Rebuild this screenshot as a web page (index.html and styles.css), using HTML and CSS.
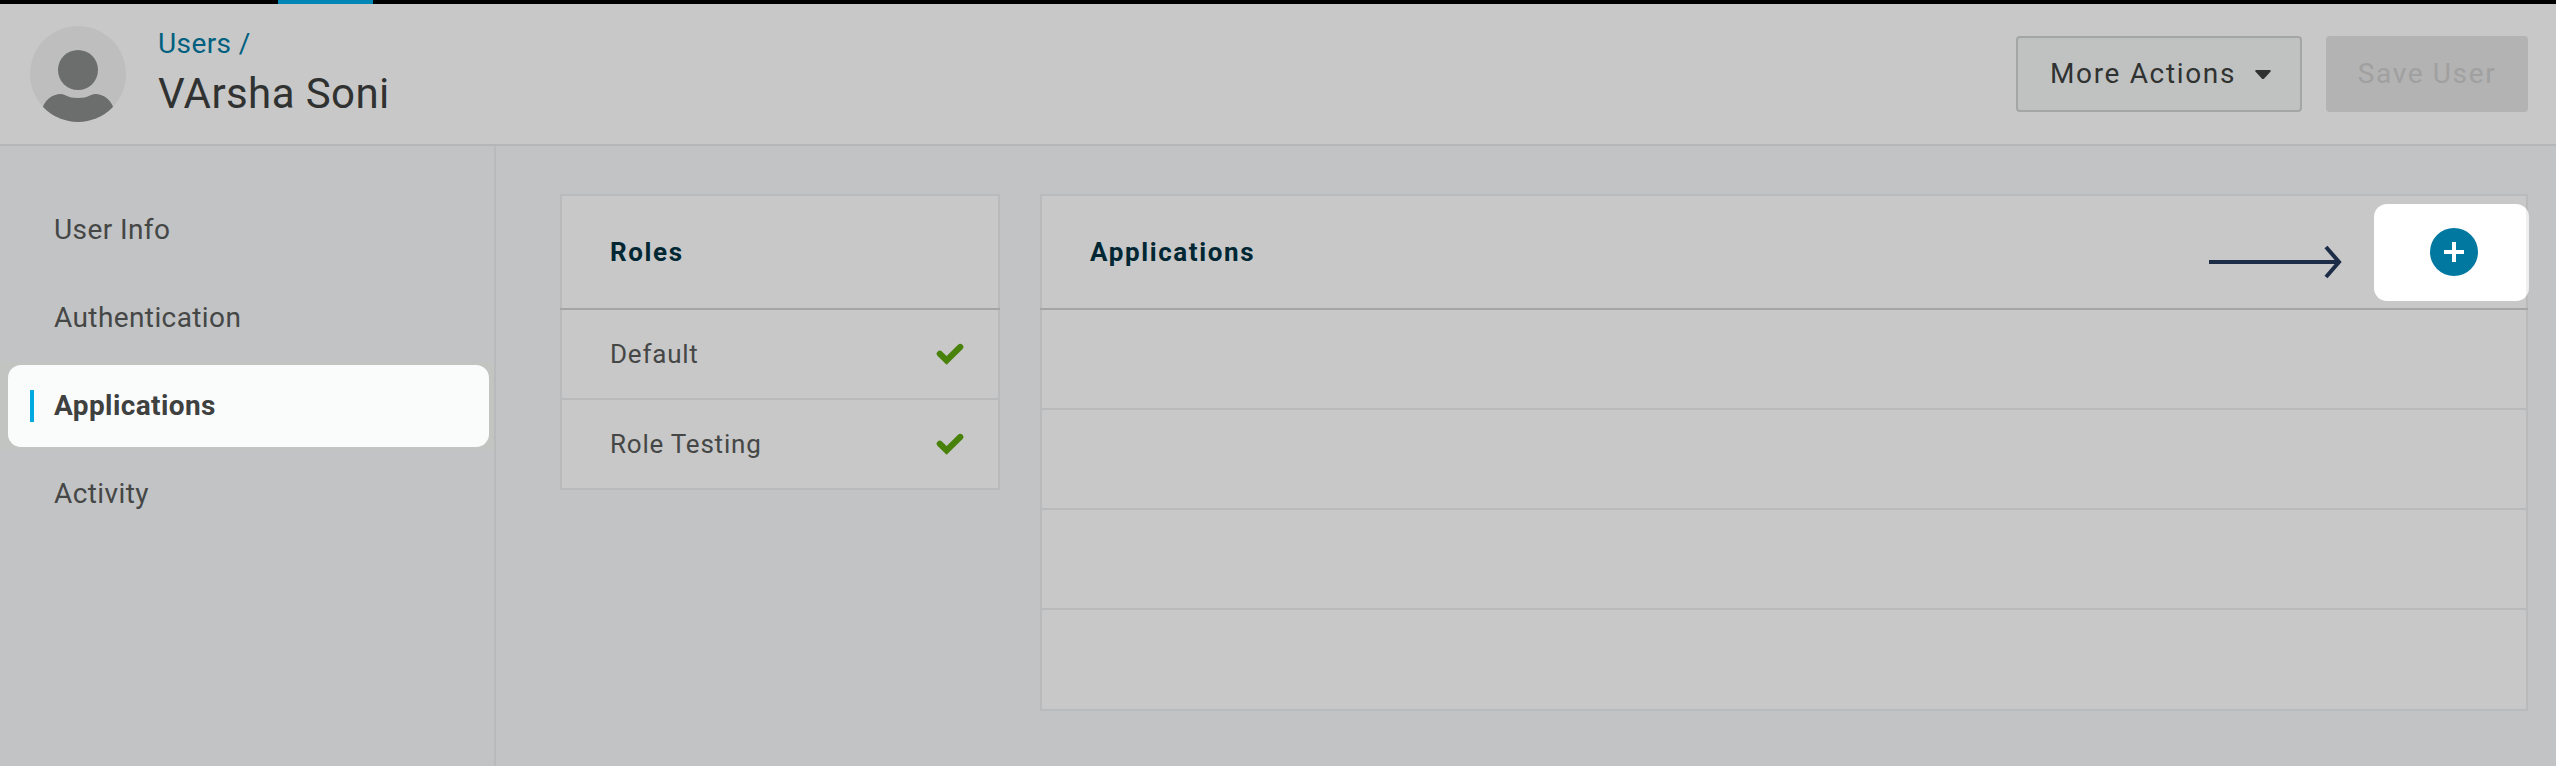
FILE: index.html
```
<!DOCTYPE html>
<html lang="en">
<head>
<meta charset="utf-8">
<title>Users / VArsha Soni</title>
<link rel="stylesheet" href="styles.css">
</head>
<body>
<div class="topbar"><div class="topbar-active"></div></div>
<header class="header">
  <svg class="avatar" viewBox="0 0 96 96">
    <defs><clipPath id="disc"><circle cx="48" cy="48" r="48"/></clipPath></defs>
    <circle cx="48" cy="48" r="48" fill="#bebebe"/>
    <g fill="#6c6e6d" clip-path="url(#disc)">
      <circle cx="48" cy="44" r="20"/>
      <path d="M11 86C14 74 22 68 31 68C35.500 68 37 72 48 72C59 72 60.500 68 65 68C74 68 82 74 85 86V96H11Z"/>
    </g>
  </svg>
  <div class="titles">
    <a class="crumb">Users /</a>
    <h1 class="name">VArsha Soni</h1>
  </div>
  <button class="btn btn-more"><span class="label">More Actions</span>
    <svg class="caret" viewBox="0 0 16 9"><path d="M1 0H15Q16.400 .6 15.400 1.800L9.200 8.400Q8 9.400 6.800 8.400L.6 1.800Q-.4 .6 1 0Z" fill="#303231"/></svg>
  </button>
  <button class="btn btn-save"><span class="label">Save User</span></button>
</header>
<div class="body">
  <nav class="sidebar">
    <a class="item"><span class="label">User Info</span></a>
    <a class="item"><span class="label">Authentication</span></a>
    <a class="item item-active"><span class="item-spot"><span class="marker"></span><span class="label">Applications</span></span></a>
    <a class="item"><span class="label">Activity</span></a>
  </nav>
  <main class="main">
    <section class="panel roles">
      <div class="panel-head">Roles</div>
      <div class="role">Default
        <svg class="check" viewBox="0 0 28 22"><path d="M3.800 10.800L10.600 17.400L24.200 4" fill="none" stroke="#49820b" stroke-width="6.200" stroke-linecap="round"/></svg>
      </div>
      <div class="role">Role Testing
        <svg class="check" viewBox="0 0 28 22"><path d="M3.800 10.800L10.600 17.400L24.200 4" fill="none" stroke="#49820b" stroke-width="6.200" stroke-linecap="round"/></svg>
      </div>
    </section>
    <section class="panel apps">
      <div class="panel-head">Applications
        <svg class="arrow" viewBox="0 0 134 34"><path d="M0 17H129M117 2L130 17L117 32" fill="none" stroke="#1d2d47" stroke-width="4"/></svg>
        <span class="add-spot"><svg class="add" viewBox="0 0 48 48"><circle cx="24" cy="24" r="24" fill="#00789f"/><path d="M14 24H34M24 14V34" stroke="#fff" stroke-width="4"/></svg></span>
      </div>
      <div class="slot"></div><div class="slot"></div><div class="slot"></div><div class="slot slot-last"></div>
    </section>
  </main>
</div>
</body>
</html>
```
FILE: styles.css
```
* { box-sizing: border-box; }
body { margin: 0; height: 766px; display: flex; flex-direction: column; overflow: hidden; background: #c2c3c5; color: #454746; font-family: Roboto, sans-serif; font-size: 28px; letter-spacing: .4px; }
.topbar { height: 4px; flex: none; background: #000; }
.topbar-active { width: 95px; height: 4px; margin-left: 278px; background: #0087b5; }
.header { height: 142px; flex: none; display: flex; align-items: center; padding: 0 28px 0 30px; background: #c8c8c8; border-bottom: 2px solid #b5b6b8; }
.avatar { width: 96px; height: 96px; flex: none; }
.titles { flex: 1; margin-left: 32px; padding-bottom: 3px; }
.label { padding-bottom: 1px; }
.crumb { display: block; line-height: 42px; color: #00607f; }
.name { margin: 0; font-size: 42px; line-height: 58px; font-weight: 400; color: #303231; }
.btn { height: 76px; margin: 0; border: 0; border-radius: 4px; font: inherit; letter-spacing: .059em; display: flex; align-items: center; white-space: nowrap; }
.btn-more { width: 286px; padding: 0 29px 0 32px; justify-content: space-between; border: 2px solid #a4a6a5; background: #c0c2c1; color: #303231; }
.caret { width: 16px; height: 9px; }
.btn-save { width: 202px; margin-left: 24px; padding: 0; justify-content: center; background: #b3b3b3; color: #a0a0a0; }
.body { flex: 1; display: flex; min-height: 0; }
.sidebar { width: 496px; flex: none; padding-top: 40px; border-right: 2px solid #b9babc; }
.item { display: flex; align-items: center; height: 88px; padding-left: 54px; }
.item-active { padding: 0 5px 0 8px; background: #c2c4c2; font-weight: 700; color: #3f4140; }
.item-spot { flex: 1; height: 82px; display: flex; align-items: center; padding-left: 22px; border-radius: 13px; background: #fafcfb; }
.marker { width: 4px; height: 32px; margin-right: 20px; background: #00a8e1; }
.main { flex: 1; display: flex; align-items: flex-start; gap: 40px; padding: 48px 28px 0 64px; font-size: 26px; letter-spacing: .03em; }
.panel { background: #c8c8c8; border: 2px solid #b9babb; }
.roles { width: 440px; }
.apps { flex: 1; }
.panel-head { height: 114px; margin: 0 -2px; padding: 0 0 0 50px; display: flex; align-items: center; border-bottom: 2px solid #a5a5a5; font-weight: 700; letter-spacing: .062em; color: #002733; }
.role { height: 90px; padding: 0 34px 0 48px; display: flex; align-items: center; justify-content: space-between; border-bottom: 2px solid #b9babb; }
.role:last-child { height: 88px; border-bottom: 0; }
.check { width: 28px; height: 22px; }
.arrow { width: 134px; height: 34px; margin: 20px 31px 0 auto; }
.add-spot { width: 155px; height: 97px; flex: none; margin-right: -1px; display: flex; align-items: center; padding-left: 80px; padding-left: 56px; border-radius: 13px; background: linear-gradient(to right, #fff 152px, #eeeff0 152px); }
.add { width: 48px; height: 48px; }
.slot { height: 100px; border-bottom: 2px solid #b9babb; }
.slot-last { height: 99px; border-bottom: 0; }
```
